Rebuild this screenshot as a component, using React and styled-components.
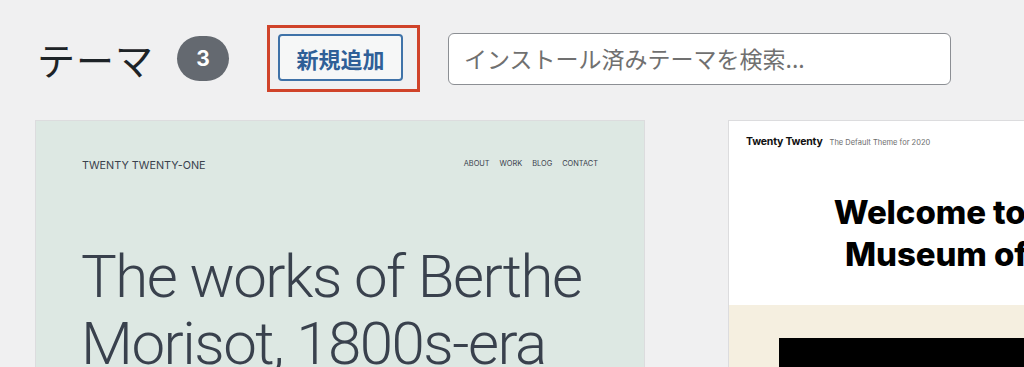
import React from 'react'
import styled, { createGlobalStyle } from 'styled-components'

const GlobalStyle = createGlobalStyle`
  body {
    margin: 0;
    background: #f0f0f1;
    overflow: hidden;
    font-family: 'Noto Sans CJK JP', 'Noto Sans', sans-serif;
  }
`

const Page = styled.div`
  width: 1024px;
  height: 367px;
  overflow: hidden;
`

const Header = styled.div`
  display: flex;
  align-items: center;
  padding: 25px 0 0 37px;
`

const Title = styled.h1`
  margin: 0 23px 0 0;
  font-size: 38px;
  font-weight: 400;
  color: #1d2327;
  line-height: 1;
  letter-spacing: 1px;
`

const Count = styled.span`
  display: flex;
  align-items: center;
  justify-content: center;
  width: 52px;
  height: 45px;
  border-radius: 23px;
  background: #646970;
  color: #fff;
  font-family: 'Inter', 'Liberation Sans', sans-serif;
  font-weight: 700;
  font-size: 21px;
  margin-right: 38px;
`

const Highlight = styled.div`
  border: 3px solid #d0432a;
  padding: 6px 14px 8px 8px;
  margin-right: 28px;
`

const AddButton = styled.button`
  display: flex;
  align-items: center;
  justify-content: center;
  width: 125px;
  height: 47px;
  border: 2px solid #3f72a8;
  border-radius: 4px;
  background: #f6f7f7;
  color: #2f5f97;
  font-family: 'Noto Sans CJK JP', sans-serif;
  font-weight: 700;
  font-size: 22px;
  padding: 0;
`

const Search = styled.input`
  box-sizing: border-box;
  width: 503px;
  height: 52px;
  border: 1.5px solid #8c8f94;
  border-radius: 6px;
  background: #fff;
  padding: 0 0 2px 15px;
  font-family: 'Noto Sans CJK JP', sans-serif;
  font-size: 23px;
  color: #3c434a;
  outline: none;
  &::placeholder {
    color: #707070;
  }
`

const Grid = styled.div`
  display: grid;
  grid-template-columns: 610px 610px;
  column-gap: 83px;
  padding: 28px 0 0 35px;
`

const Card = styled.div`
  box-sizing: border-box;
  height: 400px;
  border: 1px solid #dcdcde;
  background: ${p => p.bg};
  overflow: hidden;
`

const OneTop = styled.div`
  display: flex;
  justify-content: space-between;
  align-items: center;
  padding: 38px 46px 0 46px;
  color: #39414d;
  font-family: 'Inter', 'Roboto', sans-serif;
`

const SiteName = styled.div`
  font-size: 10.8px;
`

const Nav = styled.nav`
  display: flex;
  gap: 10px;
  font-size: 7.4px;
  margin-top: -4px;
`

const BigHeadline = styled.h2`
  margin: 71px 0 0 45px;
  font-family: 'Roboto', 'Inter', sans-serif;
  font-weight: 300;
  font-size: 60px;
  line-height: 67px;
  letter-spacing: -1.5px;
  color: #39414d;
`

const TwentyTop = styled.div`
  display: flex;
  align-items: baseline;
  gap: 7px;
  padding: 14px 0 0 17px;
  font-family: 'Inter', 'Liberation Sans', sans-serif;
`

const Brand = styled.div`
  font-size: 10.5px;
  font-weight: 700;
  color: #111;
  letter-spacing: -0.2px;
`

const Tagline = styled.div`
  font-size: 7.5px;
  color: #6d6d6d;
`

const Hero = styled.h2`
  margin: 43px 0 0;
  height: 114px;
  text-align: center;
  font-family: 'Inter', 'Liberation Sans', sans-serif;
  font-weight: 800;
  font-size: 33px;
  line-height: 42px;
  letter-spacing: -0.1px;
  color: #000;
`

const Band = styled.div`
  background: #f5efe0;
  padding: 33px 0 0 50px;
  height: 200px;
`

const Cover = styled.div`
  height: 100px;
  background: #000;
`

export default function App() {
  return (
    <Page>
      <GlobalStyle />
      <Header>
        <Title>テーマ</Title>
        <Count>3</Count>
        <Highlight>
          <AddButton>新規追加</AddButton>
        </Highlight>
        <Search placeholder="インストール済みテーマを検索..." />
      </Header>
      <Grid>
        <Card bg="#dde8e3">
          <OneTop>
            <SiteName>TWENTY TWENTY-ONE</SiteName>
            <Nav>
              <span>ABOUT</span>
              <span>WORK</span>
              <span>BLOG</span>
              <span>CONTACT</span>
            </Nav>
          </OneTop>
          <BigHeadline>
            The works of Berthe
            <br />
            Morisot, 1800s-era
          </BigHeadline>
        </Card>
        <Card bg="#fff">
          <TwentyTop>
            <Brand>Twenty Twenty</Brand>
            <Tagline>The Default Theme for 2020</Tagline>
          </TwentyTop>
          <Hero>
            Welcome to the Swedish
            <br />
            Museum of Modern Art
          </Hero>
          <Band>
            <Cover />
          </Band>
        </Card>
      </Grid>
    </Page>
  )
}
